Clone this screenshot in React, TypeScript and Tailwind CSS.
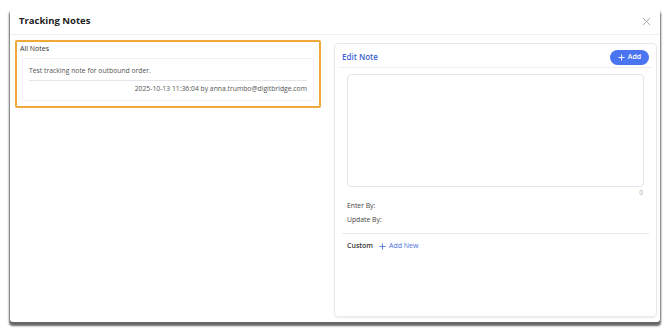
import React from "react";

export default function App() {
  return (
    <div
      className="w-[670px] h-[331px] bg-white pt-[9px] pl-[10px] pr-[10px]"
      style={{ fontFamily: '"Open Sans", "Noto Sans", sans-serif' }}
    >
      <div className="w-[650px] h-[313px] bg-white rounded-[3px] flex flex-col shadow-[0_3px_2px_1px_rgba(0,0,0,0.6)]">
        {/* Header */}
        <div className="h-[26px] flex items-center justify-between pl-[9px] pr-[9px] border-b border-[#eef0f4] shrink-0">
          <span className="text-[9.5px] font-bold text-[#222]">Tracking Notes</span>
          <svg width="9" height="9" viewBox="0 0 10 10" className="text-[#999]">
            <path d="M1 1L9 9M9 1L1 9" stroke="currentColor" strokeWidth="0.9" />
          </svg>
        </div>
        {/* Body */}
        <div className="flex flex-1 pt-[5px] pb-[5px]">
          {/* Left */}
          <div className="w-[311px] pl-[5px] shrink-0">
            <div className="border-2 border-[#f0a83a] rounded-[2px] h-[68px] pl-[3px] pr-[5px] pt-[2px] flex flex-col">
              <div className="text-[7px] text-[#333] leading-[10px]">All Notes</div>
              <div className="mt-[4px] ml-[2px] border border-[#f1f2f5] rounded-[2px] h-[43px] px-[6px] flex flex-col">
                <div className="text-[6.8px] text-[#555] leading-[9px] pt-[7px] pb-[5px] border-b border-[#e4e6ea]">
                  Test tracking note for outbound order.
                </div>
                <div className="text-[6.8px] text-[#555] leading-[9px] pt-[3px] text-right">
                  2025-10-13 11:36:04 by anna.trumbo@digitbridge.com
                </div>
              </div>
            </div>
          </div>
          {/* Right */}
          <div className="ml-[13px] mt-[3px] w-[323px] border border-[#e6e9f0] rounded-[4px] shadow-[0_1px_2px_rgba(0,0,0,0.08)] flex flex-col">
            <div className="h-[24px] mx-[4px] flex items-center justify-between border-b border-[#eceef2] pl-[3px] pr-[3px] pt-[3px]">
              <span className="text-[8px] font-semibold text-[#3d5fd6]">Edit Note</span>
              <button className="h-[15px] w-[39px] rounded-full bg-[#4a74f0] text-white text-[7px] font-semibold flex items-center justify-center gap-[3px]">
                <svg width="7" height="7" viewBox="0 0 8 8">
                  <path d="M4 0.5V7.5M0.5 4H7.5" stroke="white" strokeWidth="1.1" />
                </svg>
                Add
              </button>
            </div>
            <div className="px-[12px] pt-[6px] flex flex-col">
              <div className="h-[113px] border border-[#e3e5ea] rounded-[4px]" />
              <div className="text-right text-[6.5px] text-[#aaa] leading-[10px] pr-[1px] mt-[1px]">0</div>
              <div className="text-[6.8px] text-[#444] leading-[9px] mt-[3px]">Enter By:</div>
              <div className="text-[6.8px] text-[#444] leading-[9px] mt-[5px]">Update By:</div>
            </div>
            <div className="mx-[7px] mt-[9px] border-t border-[#e6e8ec]" />
            <div className="px-[12px] pt-[7px] flex items-center gap-[6px]">
              <span className="text-[7px] font-semibold text-[#333]">Custom</span>
              <span className="flex items-center gap-[3px] text-[7px] text-[#4a6ee0]">
                <svg width="7" height="7" viewBox="0 0 8 8">
                  <path d="M4 0.5V7.5M0.5 4H7.5" stroke="#4a6ee0" strokeWidth="1" />
                </svg>
                Add New
              </span>
            </div>
          </div>
        </div>
      </div>
    </div>
  );
}
